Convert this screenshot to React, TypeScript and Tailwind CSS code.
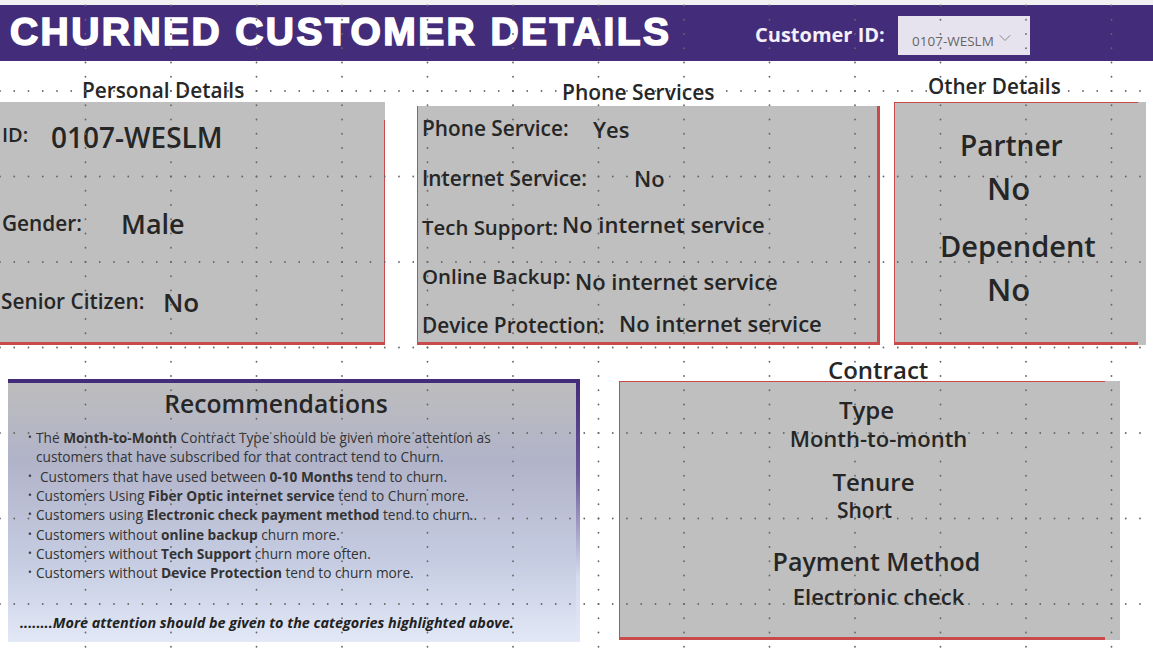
import { ChevronDown } from "lucide-react";

const columns = Array.from({ length: 81 }, (_, i) => 14.25 * i);
const rows = [91, 176.5, 262, 347.5, 433, 518.5, 604];
const lines = [85.5, 171, 256.5, 342, 427.5, 513, 598.5, 684, 769.5, 855, 940.5, 1026, 1111.5];
const steps = Array.from({ length: 46 }, (_, i) => 5.5 + 14.25 * i);

const DotGrid = () => (
  <svg className="absolute inset-0 pointer-events-none" width="1153" height="649">
    {rows.map((y) =>
      columns.map((x) => <circle key={`r${y}-${x}`} cx={x} cy={y} r="0.9" fill="#666666" />)
    )}
    {lines.map((x) =>
      steps.map((y) => <circle key={`c${x}-${y}`} cx={x} cy={y} r="0.9" fill="#666666" />)
    )}
  </svg>
);

const Label = ({ children, className }: { children: React.ReactNode; className: string }) => (
  <span className={`font-semibold text-[#262626] whitespace-nowrap ${className}`}>{children}</span>
);

const Bullet = ({ children, extra }: { children: React.ReactNode; extra?: string }) => (
  <li className="flex h-[19.3px] items-center">
    <span className="w-[8px] text-[10px]">•</span>
    <span className={`whitespace-nowrap ${extra ?? ""}`}>{children}</span>
  </li>
);

const App = () => {
  return (
    <div className="relative w-[1153px] h-[649px] overflow-hidden bg-white font-['Open_Sans',sans-serif] pt-[5px]">
      <div className="absolute top-0 left-0 w-full h-[5px] bg-[#f1f1f3]" />
      {/* header */}
      <div className="flex items-center h-[56px] bg-[#432c7a]">
        <h1 className="w-[755px] pl-[10px] -mt-[3px] font-['Liberation_Sans',sans-serif] font-bold text-[39px] leading-none tracking-[2.43px] text-white [-webkit-text-stroke:1.6px_white] whitespace-nowrap">
          CHURNED CUSTOMER DETAILS
        </h1>
        <span className="w-[143px] mt-[4px] text-[20px] font-bold text-[#f3f0fa] whitespace-nowrap">Customer ID:</span>
        <div className="flex items-end w-[132px] h-[39px] mt-[5px] pl-[14px] pb-[6px] bg-[#e6e3ef] text-[13.5px] leading-[16px] text-[#666666]">
          0107-WESLM
          <ChevronDown className="ml-[1px] -mt-[4px] mb-[1px] w-[20px] h-[20px] text-[#777777]" strokeWidth={1} />
        </div>
      </div>

      {/* top row */}
      <div className="flex h-[284px]">
        <div className="w-[385px] shrink-0">
          <div className="h-[41px] pl-[82px] pt-[15px] leading-[28px]">
            <Label className="text-[20.8px]">Personal Details</Label>
          </div>
          <div className="relative h-[243px] pt-[17px] bg-[#bfbfbf] border-b-[3px] border-[#c84a4a]">
            <div className="absolute right-0 top-[18px] bottom-0 w-px bg-[#c84a4a]" />
            <div className="flex items-center h-[36px] pl-[2px]">
              <Label className="w-[49px] text-[20px] -mt-[4px]">ID:</Label>
              <Label className="text-[28px]">0107-WESLM</Label>
            </div>
            <div className="flex items-center h-[36px] mt-[51px] pl-[2px]">
              <Label className="w-[119px] text-[20.8px]">Gender:</Label>
              <Label className="text-[27px]">Male</Label>
            </div>
            <div className="flex items-center h-[36px] mt-[42px] pl-[1px]">
              <Label className="w-[162px] text-[20.8px]">Senior Citizen:</Label>
              <Label className="text-[26px]">No</Label>
            </div>
          </div>
        </div>

        <div className="w-[463px] ml-[32px] shrink-0">
          <div className="h-[45px] pl-[145px] pt-[17px] leading-[28px]">
            <Label className="text-[21px]">Phone Services</Label>
          </div>
          <div className="h-[239px] bg-[#bfbfbf] border-l border-r-[3px] border-b-[3px] border-l-[#c84a4a] border-r-[#c84a4a] border-b-[#c84a4a] pl-[4px] pt-[8px]">
            <div className="flex items-center h-[30px]">
              <Label className="w-[171px] text-[20.8px]">Phone Service:</Label>
              <Label className="text-[22px]">Yes</Label>
            </div>
            <div className="flex items-center h-[30px] mt-[19px]">
              <Label className="w-[212px] text-[20.8px] mt-[1px]">Internet Service:</Label>
              <Label className="text-[22px]">No</Label>
            </div>
            <div className="flex items-center h-[30px] mt-[19px]">
              <Label className="w-[140px] text-[20.4px]">Tech Support:</Label>
              <Label className="text-[22px] -mt-[6px]">No internet service</Label>
            </div>
            <div className="flex items-center h-[30px] mt-[19px]">
              <Label className="w-[153px] text-[20.4px]">Online Backup:</Label>
              <Label className="text-[22px] mt-[10px]">No internet service</Label>
            </div>
            <div className="flex items-center h-[30px] mt-[19px]">
              <Label className="w-[197px] text-[20.8px] mt-[1px]">Device Protection:</Label>
              <Label className="text-[22px] -mt-[4px]">No internet service</Label>
            </div>
          </div>
        </div>

        <div className="w-[252px] ml-[14px] shrink-0">
          <div className="h-[41px] pl-[34px] pt-[11px] leading-[28px]">
            <Label className="text-[20.7px]">Other Details</Label>
          </div>
          <div className="relative h-[243px] bg-[#bfbfbf] flex flex-col">
            <div className="absolute top-0 left-0 w-[244px] h-px bg-[#c84a4a]" />
            <div className="absolute top-0 bottom-0 left-0 w-px bg-[#c84a4a]" />
            <div className="absolute bottom-0 left-0 w-[244px] h-[3px] bg-[#c84a4a]" />
            <Label className="mt-[23px] ml-[66px] text-[28px] leading-[40px]">Partner</Label>
            <Label className="mt-[1px] ml-[93px] text-[31px] leading-[44px]">No</Label>
            <Label className="mt-[16px] ml-[46px] text-[29px] leading-[40px]">Dependent</Label>
            <Label className="mt-[1px] ml-[93px] text-[31px] leading-[44px]">No</Label>
          </div>
        </div>
      </div>

      {/* bottom row */}
      <div className="flex items-start mt-[34px] pl-[8px]">
        <div className="relative w-[572px] h-[263px] shrink-0 bg-[linear-gradient(180deg,#bdbdbd_0%,#b1b3c9_30%,#c6cde2_70%,#e2e8f6_100%)] border-t-[4px] border-[#432c7a]">
          <div className="absolute top-0 bottom-0 right-0 w-[4px] bg-[linear-gradient(180deg,#432c7a_0%,#6a5a9a_35%,#d6dcef_75%,#e2e8f6_100%)]" />
          <div className="text-center h-[42px] pt-[4px] pr-[36px] text-[24.7px] leading-[34px] font-semibold text-[#262626]">
            Recommendations
          </div>
          <ul className="pl-[20px] pt-[3px] text-[13.7px] leading-[19px] text-[#333333]">
            <Bullet>
              The&nbsp;<b>Month-to-Month</b>&nbsp;Contract Type should be given more attention as
            </Bullet>
            <li className="h-[19.3px] pl-[8px] whitespace-nowrap">
              customers that have subscribed for that contract tend to Churn.
            </li>
            <Bullet extra="pl-[4px]">
              Customers that have used between&nbsp;<b>0-10 Months</b>&nbsp;tend to churn.
            </Bullet>
            <Bullet>
              Customers Using&nbsp;<b>Fiber Optic internet service</b>&nbsp;tend to Churn more.
            </Bullet>
            <Bullet>
              Customers using&nbsp;<b>Electronic check payment method</b>&nbsp;tend to churn..
            </Bullet>
            <Bullet>
              Customers without&nbsp;<b>online backup</b>&nbsp;churn more.
            </Bullet>
            <Bullet>
              Customers without&nbsp;<b>Tech Support</b>&nbsp;churn more often.
            </Bullet>
            <Bullet>
              Customers without&nbsp;<b>Device Protection</b>&nbsp;tend to churn more.
            </Bullet>
          </ul>
          <div className="mt-[31px] pl-[12px] text-[14.4px] leading-[20px] font-bold italic text-[#222222] whitespace-nowrap">
            ........More attention should be given to the categories highlighted above.
          </div>
        </div>

        <div className="w-[501px] ml-[39px] -mt-[18px] shrink-0">
          <div className="h-[20px] pl-[209px] leading-[18px]">
            <Label className="text-[24px]">Contract</Label>
          </div>
          <div className="relative h-[259px] pl-[18px] bg-[#bfbfbf] flex flex-col items-center">
            <div className="absolute top-0 left-0 w-[486px] h-px bg-[#c84a4a]" />
            <div className="absolute top-0 bottom-0 left-0 w-px bg-[#c84a4a]" />
            <div className="absolute bottom-0 left-0 w-[486px] h-[3px] bg-[#c84a4a]" />
            <Label className="mt-[13px] -ml-[24px] text-[24px] leading-[32px]">Type</Label>
            <Label className="-mt-[3px] text-[22px] leading-[30px]">Month-to-month</Label>
            <Label className="mt-[13px] -ml-[10px] text-[24px] leading-[32px]">Tenure</Label>
            <Label className="-mt-[2px] -ml-[28px] text-[21px] leading-[28px]">Short</Label>
            <Label className="mt-[20px] -ml-[4px] text-[25px] leading-[34px]">Payment Method</Label>
            <Label className="mt-[3px] text-[22px] leading-[30px]">Electronic check</Label>
          </div>
        </div>
      </div>

      <DotGrid />
    </div>
  );
};

export default App;
